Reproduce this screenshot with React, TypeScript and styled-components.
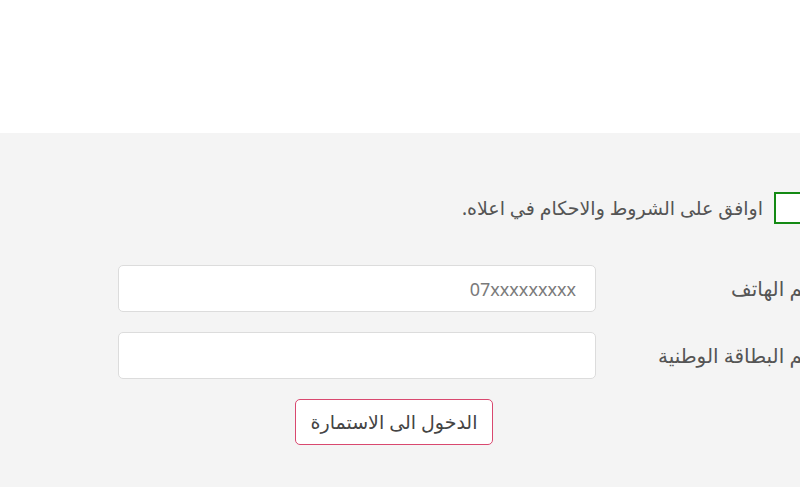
import React from "react";
import styled, { createGlobalStyle } from "styled-components";

const GlobalStyle = createGlobalStyle`
  html, body {
    margin: 0;
    padding: 0;
    background: #ffffff;
    overflow: hidden;
  }
  body {
    font-family: "Noto Sans", "DejaVu Sans", sans-serif;
  }
`;

const Header = styled.header`
  height: 133px;
  background: #ffffff;
`;

const Section = styled.section`
  height: 354px;
  background: #f4f4f4;
  overflow: hidden;
`;

const Panel = styled.div`
  width: 830px;
  direction: rtl;
  padding-top: 59px;
  box-sizing: border-box;
`;

const AgreeRow = styled.label`
  display: flex;
  align-items: center;
  gap: 11px;
  padding-right: 24px;
  height: 32px;
  color: #555555;
  font-size: 19px;
  cursor: pointer;
`;

const CheckBox = styled.span`
  width: 32px;
  height: 32px;
  box-sizing: border-box;
  border: 2px solid #148a14;
  background: #ffffff;
  flex-shrink: 0;
`;

const Fields = styled.div`
  display: grid;
  grid-template-columns: 226px 478px;
  row-gap: 20px;
  padding-right: 8px;
  margin-top: 41px;
  align-items: center;
`;

const Label = styled.span`
  color: #555555;
  font-size: 20px;
`;

const Input = styled.input`
  height: 47px;
  width: 100%;
  box-sizing: border-box;
  border: 1px solid #dcdcdc;
  border-radius: 5px;
  background: #ffffff;
  padding: 0 19px;
  font-family: inherit;
  font-size: 18px;
  color: #555555;
  outline: none;
  &::placeholder {
    color: #7a7a7a;
  }
`;

const ButtonRow = styled.div`
  display: flex;
  justify-content: center;
  padding-right: 42px;
  margin-top: 20px;
`;

const SubmitButton = styled.button`
  width: 198px;
  height: 46px;
  border: 1px solid #d9486f;
  border-radius: 5px;
  background: #ffffff;
  color: #444444;
  font-family: inherit;
  font-size: 19px;
  cursor: pointer;
`;

const App = () => {
  return (
    <>
      <GlobalStyle />
      <Header />
      <Section>
        <Panel>
          <AgreeRow>
            <CheckBox />
            <span>اوافق على الشروط والاحكام في اعلاه.</span>
          </AgreeRow>
          <Fields>
            <Label>رقم الهاتف</Label>
            <Input type="text" placeholder="07xxxxxxxxx" />
            <Label>رقم البطاقة الوطنية</Label>
            <Input type="text" />
          </Fields>
          <ButtonRow>
            <SubmitButton>الدخول الى الاستمارة</SubmitButton>
          </ButtonRow>
        </Panel>
      </Section>
    </>
  );
};

export default App;
